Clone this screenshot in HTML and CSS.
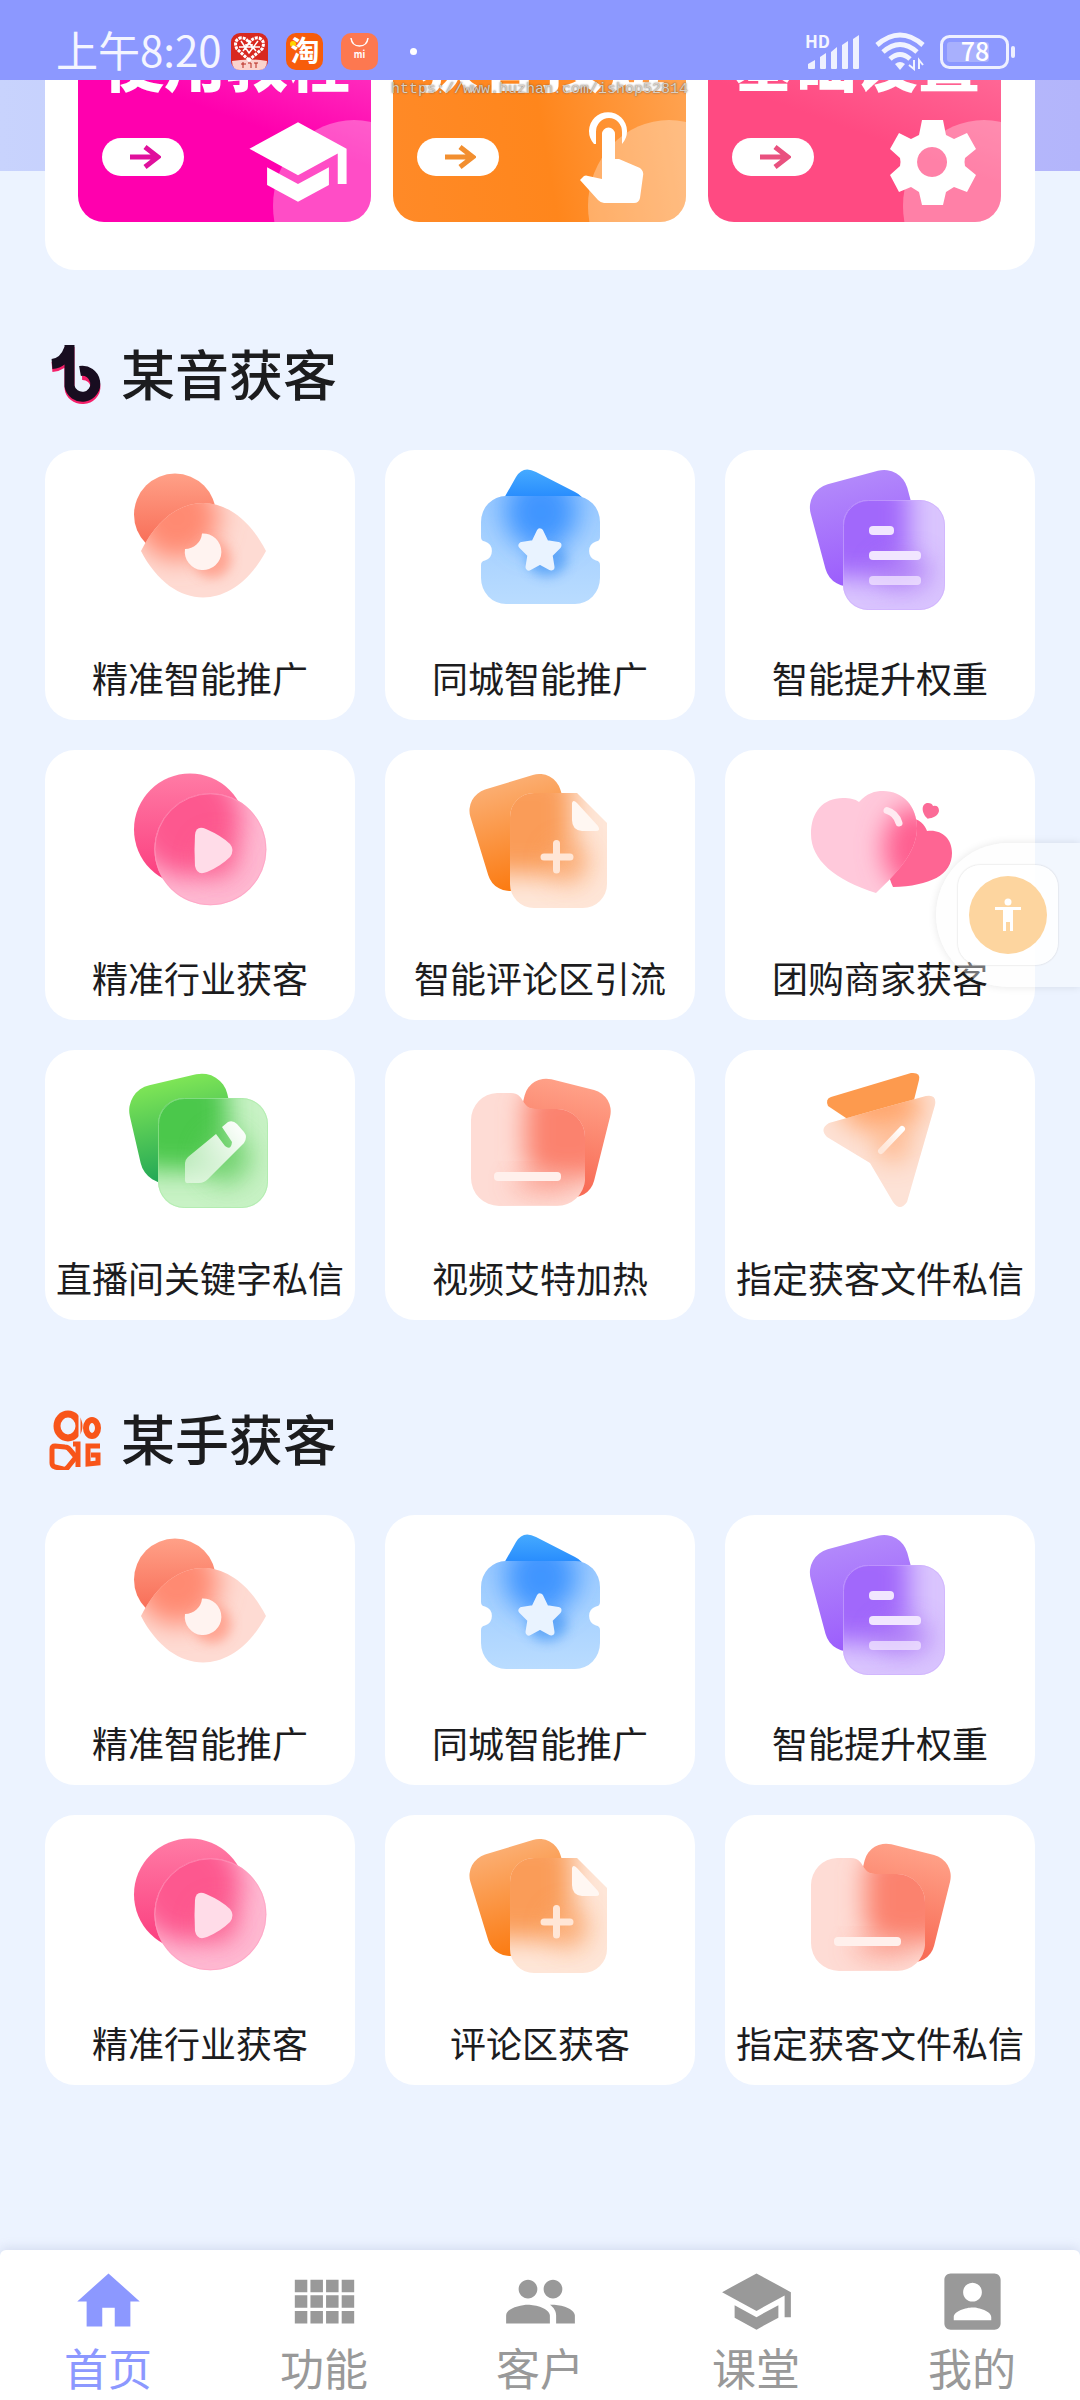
FILE: index.html
```html
<!DOCTYPE html>
<html lang="zh-CN">
<head>
    <meta charset="utf-8">
    <meta name="viewport" content="width=device-width, initial-scale=1">
    <title>首页</title>
    <link rel="stylesheet" href="styles.css">
</head>
<body>
    <!-- shared icons -->
    <svg class="defs" aria-hidden="true">
        <defs>
            <filter id="blur" x="-70%" y="-70%" width="240%" height="240%"><feGaussianBlur stdDeviation="13"/></filter>
            <filter id="blurSmall" x="-60%" y="-60%" width="220%" height="220%"><feGaussianBlur stdDeviation="6"/></filter>
            <linearGradient id="gWhite" x1="1" y1="0" x2="0" y2="1"><stop offset="0" stop-color="#fff"/><stop offset="1" stop-color="#fff" stop-opacity=".5"/></linearGradient>
            <linearGradient id="gCoral" x1=".3" y1="0" x2=".3" y2="1"><stop offset="0" stop-color="#ffa087"/><stop offset=".9" stop-color="#f86c56"/></linearGradient>
            <linearGradient id="gBlue" x1="0" y1="0" x2="0" y2="1"><stop offset="0" stop-color="#45aaff"/><stop offset="1" stop-color="#2387fd"/></linearGradient>
            <linearGradient id="gBlueFront" x1="0" y1="0" x2="0" y2="1"><stop offset="0" stop-color="#8fc3ff"/><stop offset="1" stop-color="#bbddff"/></linearGradient>
            <linearGradient id="gPurple" x1="0" y1="0" x2="0" y2="1"><stop offset="0" stop-color="#b288fb"/><stop offset="1" stop-color="#9b5cfc"/></linearGradient>
            <linearGradient id="gPink" x1="0" y1="0" x2="0" y2="1"><stop offset="0" stop-color="#ff7ba5"/><stop offset="1" stop-color="#fb3b7d"/></linearGradient>
            <linearGradient id="gOrange" x1="0" y1="0" x2="0" y2="1"><stop offset="0" stop-color="#fbad70"/><stop offset="1" stop-color="#fb7a10"/></linearGradient>
            <linearGradient id="gGreen" x1="0" y1="0" x2="0" y2="1"><stop offset="0" stop-color="#7ee556"/><stop offset="1" stop-color="#1fa556"/></linearGradient>
            <clipPath id="cEye"><path d="M16 91C48 27 108 27 141 91C108 153 48 153 16 91Z"/></clipPath>
            <clipPath id="cTicket"><path d="M41 36H110A25 26 0 0 1 135 62V77Q135 81 131 81.500A10 10 0 0 0 131 100.500Q135 101 135 105V118A25 26 0 0 1 110 144H41A25 26 0 0 1 16 118V105Q16 101 20 100.500A10 10 0 0 0 20 81.500Q16 81 16 77V62A25 26 0 0 1 41 36Z"/></clipPath>
            <clipPath id="cDoc"><rect x="38" y="40" width="102" height="110" rx="25"/></clipPath>
            <clipPath id="cPlay"><circle cx="85.400" cy="89.300" r="56"/></clipPath>
            <clipPath id="cNote"><path d="M69 33H112L142 63V124A24 24 0 0 1 118 148H69A24 24 0 0 1 45 124V57A24 24 0 0 1 69 33Z"/></clipPath>
            <clipPath id="cHeart"><path d="M54 42C62 33 70 31 78 31C98 31 112 46 112 68C112 88 98 108 71 133C30 120 6 100 6 74C6 52 18 38 38 38C45 38 50 39 54 42Z"/></clipPath>
            <clipPath id="cPen"><rect x="33" y="38" width="110" height="110" rx="26"/></clipPath>
            <clipPath id="cFolder"><path d="M32 33H46C60 33 56 49 70 49H92A28 28 0 0 1 120 77V120A28 28 0 0 1 92 146H34A28 28 0 0 1 6 118V60A27 27 0 0 1 32 33Z"/></clipPath>
            <clipPath id="cPlane"><path d="M24 63L121 36Q132 34 130 45L102 142Q95 152 88 142L65 103L22 77Q14 69 24 63Z"/></clipPath>
        </defs>

        <symbol id="eye" viewBox="0 0 150 150">
            <circle cx="50" cy="54.600" r="41" fill="url(#gCoral)"/>
            <g clip-path="url(#cEye)">
                <rect width="150" height="150" fill="#fedbd3"/>
                <circle cx="52" cy="58" r="42" fill="#ff8a72" filter="url(#blur)"/>
                <circle cx="87" cy="99" r="19" fill="#ff9883" opacity=".8" filter="url(#blurSmall)"/>
            </g>
            <path d="M77 73.500A18.300 18.300 0 1 1 60 89A17 17 0 0 0 77 73.500Z" fill="#fff3f0"/>
        </symbol>

        <symbol id="ticket" viewBox="0 0 150 150">
            <path d="M38 40L51 17Q58 5 71 12L110 32Q118 36 119 42Z" fill="url(#gBlue)"/>
            <g clip-path="url(#cTicket)">
                <rect width="150" height="150" fill="url(#gBlueFront)"/>
                <ellipse cx="76" cy="52" rx="36" ry="38" fill="#3f95ff" filter="url(#blur)"/>
                <ellipse cx="82" cy="99" rx="20" ry="17" fill="#4797f5" opacity=".7" filter="url(#blurSmall)"/>
            </g>
            <path d="M75 72L80.500 83.500L93 85.500L84 94.500L86 107L75 101L64 107L66 94.500L57 85.500L69.500 83.500Z" fill="#e9f3ff" stroke="#e9f3ff" stroke-width="7" stroke-linejoin="round"/>
        </symbol>

        <symbol id="doc" viewBox="0 0 150 150">
            <rect width="100" height="105" rx="24" fill="url(#gPurple)" transform="translate(-.5 30.500) rotate(-15)"/>
            <g clip-path="url(#cDoc)">
                <rect width="150" height="150" fill="#dac5fe"/>
                <rect x="10" y="15" width="94" height="102" rx="24" fill="#a168fb" filter="url(#blur)"/>
                <ellipse cx="98" cy="112" rx="28" ry="17" fill="#a873f5" opacity=".75" filter="url(#blur)"/>
            </g>
            <rect x="38.500" y="40.500" width="101" height="109" rx="25" fill="none" stroke="#cdaefd" opacity=".6"/>
            <g fill="#f1e6ff"><rect x="64" y="66" width="25" height="9" rx="4"/><rect x="64" y="91" width="52" height="9" rx="4"/><rect x="64" y="116" width="52" height="9" rx="4" opacity=".75"/></g>
        </symbol>

        <symbol id="play" viewBox="0 0 150 150">
            <circle cx="65" cy="69.500" r="56" fill="url(#gPink)"/>
            <g clip-path="url(#cPlay)">
                <rect width="150" height="150" fill="#feb9d2"/>
                <ellipse cx="62" cy="60" rx="54" ry="56" fill="#fd588f" filter="url(#blur)"/>
                <circle cx="93" cy="98" r="20" fill="#fb608f" opacity=".7" filter="url(#blur)"/>
            </g>
            <circle cx="85.400" cy="89.300" r="55.500" fill="none" stroke="#ff9cbf" opacity=".6"/>
            <path d="M70 75Q71 65 81 69Q97 76 105 84Q110 90 105 97Q96 106 82 112Q72 116 70 106Q69 90 70 75Z" fill="#ffdce8"/>
        </symbol>

        <symbol id="note" viewBox="0 0 150 150">
            <rect width="94" height="105" rx="22" fill="url(#gOrange)" transform="translate(-1 36) rotate(-17)"/>
            <g clip-path="url(#cNote)">
                <rect width="150" height="150" fill="#fee6d8"/>
                <rect x="15" y="10" width="92" height="104" rx="20" fill="#fa9c59" filter="url(#blur)"/>
                <circle cx="104" cy="103" r="20" fill="#fba76d" opacity=".8" filter="url(#blur)"/>
            </g>
            <path d="M107 43Q108 39 112 43L133 66Q136 71 131 71H117Q107 70 107 60Z" fill="#fff7f2"/>
            <path d="M91.500 83.500V110M79 97H105" stroke="#ffe6d6" stroke-width="7" stroke-linecap="round"/>
        </symbol>

        <symbol id="heart" viewBox="0 0 150 150">
            <path d="M88 127C84 118 80 105 80 90C80 65 92 58 104 58C114 58 120 65 122 71C136 69 147 78 147 93C147 115 125 126 88 127Z" fill="#fe6593"/>
            <path d="M122.700 58.700C116 53 116 43 123 43Q127 43 128 46Q134 45 134 51C133 56 128 58 122.700 58.700Z" fill="#fb6b97"/>
            <g clip-path="url(#cHeart)">
                <rect width="150" height="150" fill="#ffc9db"/>
                <ellipse cx="110" cy="88" rx="32" ry="42" fill="#fe5f90" filter="url(#blur)"/>
            </g>
            <path d="M82 50.500Q91 53 94 63" fill="none" stroke="#ffeaf1" stroke-width="7" stroke-linecap="round"/>
        </symbol>

        <symbol id="pen" viewBox="0 0 150 150">
            <rect width="100" height="100" rx="26" fill="url(#gGreen)" transform="translate(-1 31) rotate(-13)"/>
            <g clip-path="url(#cPen)">
                <rect width="150" height="150" fill="#c8f2c5"/>
                <rect x="5" y="10" width="98" height="100" rx="24" fill="#4bc84b" filter="url(#blur)"/>
                <ellipse cx="102" cy="98" rx="24" ry="26" fill="#69cf66" opacity=".8" filter="url(#blur)"/>
            </g>
            <rect x="33.500" y="38.500" width="109" height="109" rx="26" fill="none" stroke="#a5e9a3" opacity=".6"/>
            <path d="M60 103Q60 100 63 97L91 74L100 86Q106 91 107 82L97 67L103 62Q108 60 112 64L119 72Q123 77 119 83L83 119Q79 123 74 123H62Q60 123 60 120Z" fill="url(#gWhite)"/>
        </symbol>

        <symbol id="folder" viewBox="0 0 150 150">
            <rect width="88" height="110" rx="22" fill="url(#gCoral)" transform="translate(65 14) rotate(14)"/>
            <g clip-path="url(#cFolder)">
                <rect width="150" height="150" fill="#fedcd5"/>
                <rect x="60" y="24" width="86" height="94" rx="24" fill="#fb826e" filter="url(#blur)"/>
                <ellipse cx="78" cy="123" rx="32" ry="9" fill="#fb9584" opacity=".8" filter="url(#blur)"/>
            </g>
            <rect x="29" y="112" width="67" height="9" rx="4" fill="#fff0ec"/>
        </symbol>

        <symbol id="plane" viewBox="0 0 150 150">
            <path d="M26 37L106 13Q116 12 114 20L106 52L44 60L23 46Q20 39 26 37Z" fill="#fd9a4e"/>
            <g clip-path="url(#cPlane)">
                <rect width="150" height="150" fill="#fde2d6"/>
                <ellipse cx="76" cy="46" rx="42" ry="26" fill="#ffa870" filter="url(#blur)"/>
                <circle cx="88" cy="84" r="18" fill="#ffae7c" opacity=".8" filter="url(#blur)"/>
            </g>
            <path d="M97 69L76 91" stroke="url(#gWhite)" stroke-width="6" stroke-linecap="round"/>
        </symbol>

        <symbol id="arrow" viewBox="0 0 32 24"><path d="M1 12H29M16 2L29 12L16 22" fill="none" stroke="currentColor" stroke-width="5"/></symbol>
        <symbol id="school" viewBox="0 0 24 24"><path d="M5 13.180v4L12 21l7-3.820v-4L12 17l-7-3.820zM12 3L1 9l11 6 9-4.910V17h2V9L12 3z"/></symbol>
    </svg>

    <header class="statusBar">
        <span class="time">上午8:20</span>
        <div class="appIcons">
            <svg viewBox="0 0 37 37"><rect width="37" height="37" rx="9" fill="#d8281f"/><path d="M1 28Q18 25 36 28Q36 37 28 37H9Q1 37 1 28Z" fill="#fbd3cd"/><path d="M18 27L6 16Q2 8 9 5Q15 4 18 10Q22 4 28 5Q35 8 31 16Z" fill="none" stroke="#fff" stroke-width="3" stroke-dasharray="3 1"/><path d="M10 8L18 20L27 8M8 14H29M12 18L18 10L25 18M15 11V17M21 11V17" fill="none" stroke="#fff" stroke-width="1.500"/><path d="M10 31H15M12 29V35M17 30H20V35M23 30H27M25 30V35" fill="none" stroke="#b72a20"/></svg>
            <svg viewBox="0 0 37 37"><rect width="37" height="37" rx="10" fill="#f75c0b"/><circle cx="7" cy="11" r="3" fill="#ffd400"/><text x="19" y="29" font-size="29" font-weight="700" fill="#fff" text-anchor="middle">淘</text></svg>
            <svg viewBox="0 0 37 37"><rect width="37" height="37" rx="10" fill="#fd7850"/><path d="M10 5Q11 13 18.500 13Q26 13 27 5" fill="none" stroke="#fff" stroke-width="1.500"/><text x="18.500" y="25" font-size="9" font-weight="700" fill="#fff" text-anchor="middle">mi</text></svg>
        </div>
        <span class="dot"></span>
        <div class="signals">
            <svg width="54" height="36" viewBox="0 0 54 36"><text x="-1" y="14" font-size="17" font-weight="700" fill="#f4f5ff">HD</text><path d="M2 30L9 26V34Q9 35 8 35H3Q2 35 2 34ZM14 23L20 19V34Q20 35 19 35H15Q14 35 14 34ZM25 18L31 13V34Q31 35 30 35H26Q25 35 25 34ZM36 11L42 7V34Q42 35 41 35H37Q36 35 36 34ZM47 5L53 1V34Q53 35 52 35H48Q47 35 47 34Z" fill="#eef0ff"/></svg>
            <svg width="50" height="39" viewBox="0 0 50 39"><g fill="none" stroke="#f1f3ff" stroke-width="5"><path d="M2 13Q25 -7 48 13"/><path d="M8 20Q25 5 42 20"/><path d="M15 27Q25 18 35 27"/></g><path d="M20 32Q25 28 30 32L25 38Z" fill="#f1f3ff"/><path d="M39 28V37L34 33M44 37V28L48 33" fill="none" stroke="#f1f3ff" stroke-width="2"/></svg>
            <svg width="76" height="34" viewBox="0 0 76 34"><rect x="1.500" y="1.500" width="66" height="31" rx="8" fill="none" stroke="#eef0ff" stroke-width="3"/><rect x="7" y="7" width="42" height="20" rx="3" fill="#a8b0fd"/><rect x="71" y="11" width="4" height="12" rx="2" fill="#eef0ff"/><text x="35" y="26" font-size="25" font-weight="500" fill="#fff" text-anchor="middle">78</text></svg>
        </div>
    </header>

    <main>
        <div class="hero">
            <div class="panel">
                <button class="banner pink">
                    <span class="bannerTitle">使用教程</span>
                    <span class="bannerRow">
                        <span class="pill"><svg width="32" height="24"><use href="#arrow"/></svg></span>
                        <svg width="106" height="106" viewBox="0 0 24 24" fill="#fff"><use href="#school"/></svg>
                    </span>
                </button>
                <button class="banner orange">
                    <span class="bannerTitle">获客按钮</span>
                    <span class="bannerRow">
                        <span class="pill"><svg width="32" height="24"><use href="#arrow"/></svg></span>
                        <svg width="106" height="106" viewBox="0 10 106 106" fill="#fff"><path d="M34 45A19 19 0 1 1 62 45V33A13 14 0 0 0 36 33V45Z"/><path d="M42 35A6.500 6.500 0 0 1 55 35V60H59L80 69Q84 72 83 77L80 99Q79 104 74 104H44Q41 104 38 101L20 81L24 77Q26 76 28 77L42 80Z"/></svg>
                    </span>
                </button>
                <button class="banner rose">
                    <span class="bannerTitle">基础设置</span>
                    <span class="bannerRow">
                        <span class="pill"><svg width="32" height="24"><use href="#arrow"/></svg></span>
                        <svg width="106" height="106" viewBox="-5 9 106 106" fill="#fff" fill-rule="evenodd"><path d="M42 20H63L66 35L74 39L87 33L96 49L85 58Q84 62 85 66L96 75L87 92L74 87L66 92L63 105H42L39 92L31 87L19 92L10 75L20 66Q21 62 20 58L10 49L19 33L31 39L39 35ZM52 47A15 15 0 1 0 52.100 47Z"/></svg>
                    </span>
                </button>
            </div>
            <span class="watermark">https://www.huzhan.com/ishop52814</span>
        </div>

        <section>
            <h2>
                <svg width="60" height="60" viewBox="0 0 60 60"><g fill="none" stroke-width="10"><path d="M24.500 2V43A13 12 0 1 0 37 30M24 10Q18 21 7 22" stroke="#f5206a"/><path d="M24.500 0V41A13 13 0 1 0 35 26M24 4Q19 18 7 19" stroke="#180d20"/></g></svg>
                <span>某音获客</span>
            </h2>
            <div class="cards">
                <button class="card"><svg><use href="#eye"/></svg><span>精准智能推广</span></button>
                <button class="card"><svg><use href="#ticket"/></svg><span>同城智能推广</span></button>
                <button class="card"><svg><use href="#doc"/></svg><span>智能提升权重</span></button>
                <button class="card"><svg><use href="#play"/></svg><span>精准行业获客</span></button>
                <button class="card"><svg><use href="#note"/></svg><span>智能评论区引流</span></button>
                <button class="card"><svg><use href="#heart"/></svg><span>团购商家获客</span></button>
                <button class="card"><svg><use href="#pen"/></svg><span>直播间关键字私信</span></button>
                <button class="card"><svg><use href="#folder"/></svg><span>视频艾特加热</span></button>
                <button class="card"><svg><use href="#plane"/></svg><span>指定获客文件私信</span></button>
            </div>
        </section>

        <section>
            <h2>
                <svg width="60" height="60" viewBox="0 0 60 60" fill="none" stroke="#f8551a"><ellipse cx="23" cy="16" rx="11" ry="12" stroke-width="7"/><ellipse cx="47" cy="18" rx="6" ry="8" stroke-width="6"/><path d="M34.500 4V29" stroke="#ecf3ff" stroke-width="2"/><path d="M10 36L20 37Q23 37 25 40L31 47L23 57Q21 60 18 59L10 57Q7 56 7 53V39Q7 36 10 36Z" stroke-width="5"/><path d="M28 34H33V57" stroke-width="5"/><path d="M55 36H43V54L53 53V45H46" stroke-width="5"/></svg>
                <span>某手获客</span>
            </h2>
            <div class="cards">
                <button class="card"><svg><use href="#eye"/></svg><span>精准智能推广</span></button>
                <button class="card"><svg><use href="#ticket"/></svg><span>同城智能推广</span></button>
                <button class="card"><svg><use href="#doc"/></svg><span>智能提升权重</span></button>
                <button class="card"><svg><use href="#play"/></svg><span>精准行业获客</span></button>
                <button class="card"><svg><use href="#note"/></svg><span>评论区获客</span></button>
                <button class="card"><svg><use href="#folder"/></svg><span>指定获客文件私信</span></button>
            </div>
        </section>
    </main>

    <nav class="tabBar">
        <a href="#" class="active"><svg viewBox="0 0 24 24"><path d="M10 20v-6h4v6h5v-8h3L12 3 2 12h3v8z"/></svg>首页</a>
        <a href="#"><svg viewBox="0 0 24 24"><path d="M2.500 5h4v4h-4zM7.500 5h4v4h-4zM12.500 5h4v4h-4zM17.500 5h4v4h-4zM2.500 10h4v4h-4zM7.500 10h4v4h-4zM12.500 10h4v4h-4zM17.500 10h4v4h-4zM2.500 15h4v4h-4zM7.500 15h4v4h-4zM12.500 15h4v4h-4zM17.500 15h4v4h-4z"/></svg>功能</a>
        <a href="#"><svg viewBox="0 0 24 24"><path d="M16 11c1.660 0 2.990-1.340 2.990-3S17.660 5 16 5c-1.660 0-3 1.340-3 3s1.340 3 3 3zm-8 0c1.660 0 2.990-1.340 2.990-3S9.660 5 8 5C6.340 5 5 6.340 5 8s1.340 3 3 3zm0 2c-2.330 0-7 1.170-7 3.500V19h14v-2.500c0-2.330-4.670-3.500-7-3.500zm8 0c-.29 0-.62.020-.97.050 1.160.84 1.970 1.970 1.970 3.450V19h6v-2.500c0-2.330-4.670-3.500-7-3.500z"/></svg>客户</a>
        <a href="#"><svg viewBox="0 0 24 24"><use href="#school"/></svg>课堂</a>
        <a href="#"><svg viewBox="0 0 24 24"><path d="M3 5v14c0 1.100.89 2 2 2h14c1.100 0 2-.9 2-2V5c0-1.100-.9-2-2-2H5c-1.110 0-2 .9-2 2zm12 4c0 1.660-1.340 3-3 3s-3-1.340-3-3 1.340-3 3-3 3 1.340 3 3zm-9 8c0-2 4-3.100 6-3.100s6 1.100 6 3.100v1H6v-1z"/></svg>我的</a>
    </nav>

    <div class="floating">
        <button class="floatBtn" aria-label="无障碍">
            <svg width="78" height="78" viewBox="0 0 78 78"><circle cx="39" cy="39" r="39" fill="#fdd59f"/><circle cx="39" cy="26" r="3.500" fill="#fff"/><path d="M26 31H52V34H44V55H41V46H37V55H34V34H26Z" fill="#fff"/></svg>
        </button>
    </div>
</body>
</html>
```
FILE: styles.css
```css
* {
 box-sizing: border-box;
}
body {
 margin: 0;
 min-height: 100vh;
 display: flex;
 flex-direction: column;
 background-color: #ecf3ff;
 color: #1c1c1e;
 font-family: "Noto Sans CJK SC", sans-serif;
}
button {
 border: none;
 padding: 0;
 color: inherit;
 font-family: inherit;
 cursor: pointer;
}
svg {
 display: block;
 flex: none;
}
.defs {
 position: absolute;
 width: 0;
 height: 0;
}

/* status bar */
.statusBar {
 position: sticky;
 top: 0;
 z-index: 5;
 display: flex;
 align-items: center;
 height: 80px;
 padding: 23px 64px 0 56px;
 background-color: #8c98ff;
}
.time {
 padding-bottom: 6px;
 color: #f4f5ff;
 font-size: 42px;
 line-height: 50px;
}
.appIcons {
 display: flex;
 gap: 18px;
 margin-left: 9px;
}
.appIcons svg {
 width: 37px;
 height: 37px;
}
.dot {
 width: 7px;
 height: 7px;
 margin-left: 32px;
 border-radius: 50%;
 background-color: #fff;
}
.signals {
 display: flex;
 align-items: center;
 gap: 15px;
 margin-left: auto;
}

main {
 flex: 1;
}

/* top panel, scrolled half way under the status bar */
.hero {
 position: relative;
 overflow: hidden;
 padding: 0 45px;
 background: linear-gradient(to right, #c8d3fd, #b3b5fb) no-repeat 0 0 / 100% 91px;
}
.panel {
 display: grid;
 grid-template-columns: repeat(3, 1fr);
 gap: 22px;
 margin-top: -72px;
 padding: 0 34px 48px 33px;
 border-radius: 0 0 30px 30px;
 background-color: #fff;
}
.banner {
 position: relative;
 overflow: hidden;
 height: 214px;
 padding: 14px 20px 0 24px;
 border-radius: 26px;
 text-align: left;
}
.banner::after {
 content: "";
 position: absolute;
 right: -64px;
 bottom: -70px;
 width: 162px;
 height: 172px;
 border-radius: 50%;
 background-color: rgba(255, 255, 255, .3);
}
.pink {
 background: linear-gradient(20deg, #ff00ae 50%, #ff4cc8);
 color: #e0109c;
}
.orange {
 background: linear-gradient(80deg, #ff8a28, #ff861c 50%, #ffa555);
 color: #f28f30;
}
.rose {
 background: linear-gradient(20deg, #ff4a82 45%, #ff7aa2);
 color: #e9517f;
}
.bannerTitle {
 display: block;
 margin-bottom: 14px;
 color: #fff;
 font-size: 62px;
 font-weight: 900;
 line-height: 66px;
 white-space: nowrap;
}
.bannerRow {
 position: relative;
 z-index: 1;
 display: flex;
 justify-content: space-between;
 align-items: center;
 height: 110px;
}
.pill {
 display: flex;
 align-items: center;
 justify-content: center;
 width: 82px;
 height: 38px;
 margin-bottom: 10px;
 padding-left: 4px;
 border-radius: 19px;
 background-color: #fff;
}
.watermark {
 position: absolute;
 top: 0;
 left: 391px;
 color: #d9cfc5;
 font-family: "Liberation Mono", monospace;
 font-size: 15px;
 line-height: 20px;
 text-shadow: 0 0 2px #554a40;
}

/* sections */
section {
 padding: 0 45px 15px;
}
h2 {
 display: flex;
 align-items: center;
 gap: 16px;
 height: 180px;
 margin: 0;
 padding-top: 30px;
 font-size: 54px;
 font-weight: 500;
}
h2 span {
 padding-bottom: 6px;
}
.cards {
 display: grid;
 grid-template-columns: repeat(3, 1fr);
 gap: 30px;
}
.card {
 display: flex;
 flex-direction: column;
 align-items: center;
 height: 270px;
 padding-top: 10px;
 border-radius: 30px;
 background-color: #fff;
 font-size: 36px;
 line-height: 54px;
 white-space: nowrap;
}
.card svg {
 width: 150px;
 height: 150px;
 margin-bottom: 40px;
}

/* bottom tabs */
.tabBar {
 position: sticky;
 bottom: 0;
 display: flex;
 height: 150px;
 border-radius: 6px 6px 0 0;
 background-color: #fff;
 box-shadow: 0 -3px 10px rgba(150, 165, 200, .25);
}
.tabBar a {
 flex: 1;
 display: flex;
 flex-direction: column;
 align-items: center;
 padding-top: 14px;
 color: #999;
 fill: currentColor;
 font-size: 44px;
 line-height: 56px;
 text-decoration: none;
}
.tabBar a.active {
 color: #8c98ff;
}
.tabBar svg {
 width: 75px;
 height: 75px;
}

/* side button */
.floating {
 position: fixed;
 top: 843px;
 right: 0;
 padding: 22px;
 border-radius: 72px 0 0 72px;
 background-color: rgba(252, 252, 253, .4);
 box-shadow: 0 0 8px rgba(0, 0, 0, .1);
}
.floatBtn {
 display: block;
 padding: 11px;
 border-radius: 22px;
 background-color: rgba(255, 255, 255, .8);
 box-shadow: 0 0 2px rgba(0, 0, 0, .2);
}
```
